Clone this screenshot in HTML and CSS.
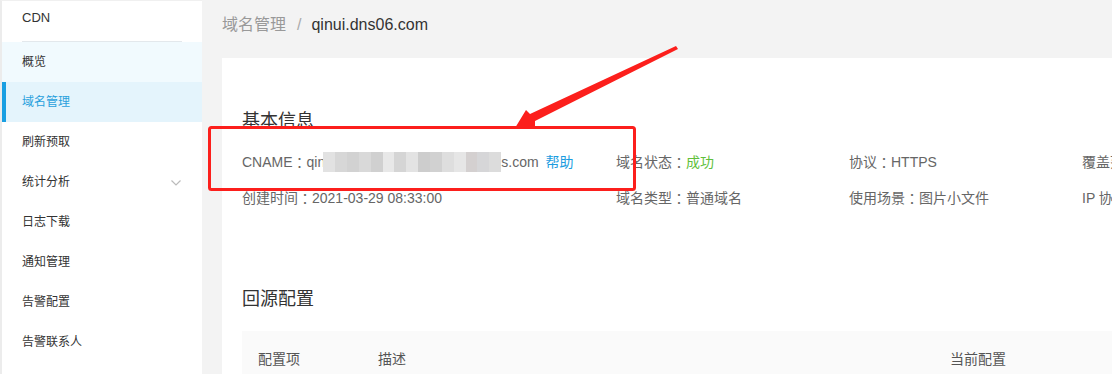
FILE: index.html
```html
<!DOCTYPE html>
<html lang="zh-CN">
<head>
<meta charset="utf-8">
<title>域名管理</title>
<link rel="stylesheet" href="styles.css">
</head>
<body>
<div class="layout">
  <aside class="sidebar">
    <div class="side-title"><span>CDN</span></div>
    <ul class="menu">
      <li class="menu-item soft">概览</li>
      <li class="menu-item active">域名管理</li>
      <li class="menu-item">刷新预取</li>
      <li class="menu-item has-sub">统计分析
        <svg class="chev" width="10" height="6" viewBox="0 0 10 6"><path d="M0.5 0.5 L5 5 L9.5 0.5" fill="none" stroke="#bbb" stroke-width="1.2"/></svg>
      </li>
      <li class="menu-item">日志下载</li>
      <li class="menu-item">通知管理</li>
      <li class="menu-item">告警配置</li>
      <li class="menu-item">告警联系人</li>
    </ul>
  </aside>
  <main class="main">
    <div class="crumb"><span class="crumb-parent">域名管理</span><span class="crumb-sep">/</span><span class="crumb-cur">qinui.dns06.com</span></div>
    <section class="card">
      <h2 class="sec-title first">基本信息</h2>
      <div class="info-grid">
        <div class="info">CNAME<span class="colon">：</span>qin<span class="blur"><i style="background:#e2e2e2"></i><i style="background:#d7d7d7"></i><i style="background:#d2d2d2"></i><i style="background:#d9d9d9"></i><i style="background:#d0d0d0"></i><i style="background:#e8e8e8"></i><i style="background:#d5d5d5"></i><i style="background:#e3e3e3"></i><i style="background:#cdcdcd"></i><i style="background:#d1d1d1"></i><i style="background:#dedede"></i><i style="background:#e6e6e6"></i><i style="background:#d4d0d0"></i><i style="background:#d6d6d8"></i><i style="background:#dcdcdc"></i></span>s.com<a class="help">帮助</a></div>
        <div class="info">域名状态<span class="colon">：</span><span class="ok">成功</span></div>
        <div class="info">协议<span class="colon">：</span>HTTPS</div>
        <div class="info">覆盖范围<span class="colon">：</span>全球</div>
        <div class="info">创建时间<span class="colon">：</span>2021-03-29 08:33:00</div>
        <div class="info">域名类型<span class="colon">：</span>普通域名</div>
        <div class="info">使用场景<span class="colon">：</span>图片小文件</div>
        <div class="info">IP 协议<span class="colon">：</span>IPv4</div>
      </div>
      <h2 class="sec-title second">回源配置</h2>
      <div class="table-head">
        <span class="th c1">配置项</span>
        <span class="th c2">描述</span>
        <span class="th c3">当前配置</span>
      </div>
    </section>
  </main>
</div>
<svg class="annot" width="1112" height="374" viewBox="0 0 1112 374">
  <rect x="209.5" y="127.5" width="425" height="62" rx="2" fill="none" stroke="#fc1f1c" stroke-width="3"/>
  <polygon points="515,128 526,110 530,114 676,46 678,49 535,121 535,126" fill="#fc1f1c"/>
</svg>
</body>
</html>
```

FILE: styles.css
```css
* { box-sizing: border-box; }
html, body { margin: 0; padding: 0; overflow: hidden; }
body {
  width: 1112px;
  height: 374px;
  font-family: "Liberation Sans", "Noto Sans CJK SC", sans-serif;
  color: #333;
  background: #f3f3f3;
  position: relative;
}
.layout { display: flex; height: 374px; }
.sidebar {
  width: 202px;
  flex: none;
  background: #fff;
  border-left: 2px solid #ececec;
  border-top: 1px solid #f0f0f0;
}
.side-title {
  height: 41px;
  padding: 0 20px;
}
.side-title span {
  display: block;
  height: 41px;
  line-height: 34px;
  font-size: 13px;
  color: #333;
  border-bottom: 1px solid #e3e8ec;
}
.menu { list-style: none; margin: 0; padding: 0; }
.menu-item {
  height: 40px;
  line-height: 40px;
  padding: 0 21px 0 16px;
  font-size: 12px;
  color: #333;
  display: flex;
  align-items: center;
  justify-content: space-between;
  border-left: 4px solid transparent;
}
.menu-item.soft { background: #f1fafe; }
.menu-item.active {
  background: #e4f4fc;
  color: #29a1dd;
  border-left-color: #1a9fe2;
}
.chev { margin-top: 1px; }
.main {
  flex: 1;
  min-width: 0;
  padding-left: 20px;
}
.crumb {
  height: 58px;
  padding-top: 14px;
  line-height: 22px;
  font-size: 16px;
  white-space: nowrap;
}
.crumb-parent { color: #999; }
.crumb-sep { color: #aaa; margin: 0 10px 0 11px; }
.crumb-cur { color: #333; }
.card {
  background: #fff;
  height: 316px;
  padding: 0 20px;
}
.sec-title {
  margin: 0;
  font-size: 18px;
  font-weight: normal;
  line-height: 24px;
  color: #333;
}
.sec-title.first { padding-top: 51px; }
.sec-title.second { margin-top: 71px; }
.info-grid {
  margin-top: 11px;
  display: grid;
  grid-template-columns: 374px 233px 233px 233px;
  width: 1073px;
}
.info {
  height: 36px;
  line-height: 36px;
  font-size: 14px;
  color: #666;
  white-space: nowrap;
  display: flex;
  align-items: center;
}
.colon { font-family: "Noto Sans CJK TC", "Noto Sans CJK SC", sans-serif; }
.blur { display: flex; height: 20px; width: 178px; margin-left: -2px; }
.blur i { flex: 1; height: 20px; display: block; }
.help { color: #1d9de0; margin-left: 7px; text-decoration: none; }
.ok { color: #61bf3b; }
.table-head {
  margin-top: 20px;
  background: #fafafa;
  height: 54px;
  width: 1073px;
  display: flex;
  align-items: center;
  font-size: 14px;
  color: #555;
  padding-left: 16px;
}
.th.c1 { width: 120px; }
.th.c2 { width: 572px; }
.annot { position: absolute; left: 0; top: 0; pointer-events: none; }
```
